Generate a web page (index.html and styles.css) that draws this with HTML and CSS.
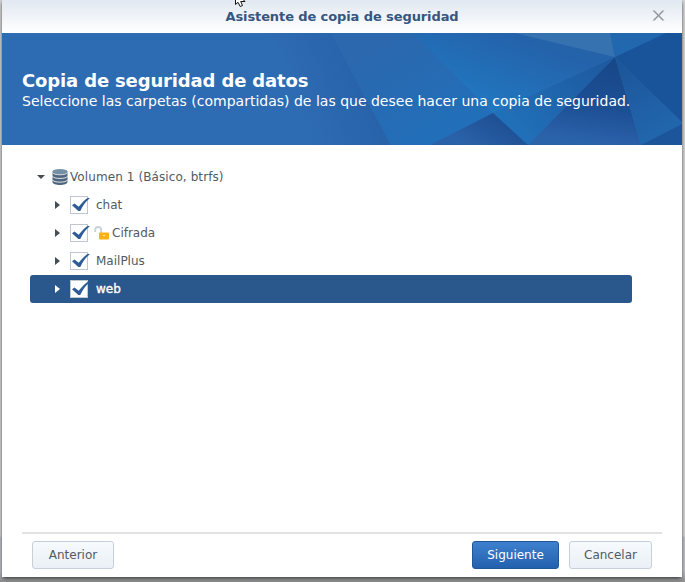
FILE: index.html
```
<!DOCTYPE html>
<html lang="es">
<head>
<meta charset="utf-8">
<title>Asistente de copia de seguridad</title>
<link rel="stylesheet" href="styles.css">
</head>
<body>
<svg class="defs" width="0" height="0" aria-hidden="true">
  <symbol id="check" viewBox="0 0 20 20"><path d="M2 9.200L4.500 7.600 8.700 10.800C11.500 7.200 14.500 4 18 1.800L19.800 2.300C15.500 6 12.500 10 10.300 15H8.300z"/></symbol>
</svg>
<main class="window">
  <header class="titlebar">
    <h1>Asistente de copia de seguridad</h1>
    <svg class="close" width="13" height="12" viewBox="0 0 13 12"><path d="M.5.5h2.200l3.800 4 3.800-4h2.200L7.600 5.500l4.900 5h-2.200l-3.800-4-3.800 4H.5l4.900-5z"/></svg>
    <svg class="cursor" width="14" height="8" viewBox="0 0 14 8"><path d="M1.500-5V4.500L4 2.300l2.200 4.200 2.300-1L6.700 1.500H11L1.500-8z"/></svg>
  </header>
  <section class="banner">
    <svg class="art" width="680" height="112" viewBox="0 0 680 112">
      <defs>
        <linearGradient id="b" gradientUnits="userSpaceOnUse" x1="510" y1="0" x2="480" y2="80"><stop offset="0" stop-color="#2462aa"/><stop offset="1" stop-color="#2079c2"/></linearGradient>
        <linearGradient id="c" gradientUnits="userSpaceOnUse" x1="600" y1="30" x2="510" y2="110"><stop offset="0" stop-color="#1e5aa0"/><stop offset="1" stop-color="#2072bb"/></linearGradient>
        <linearGradient id="d" gradientUnits="userSpaceOnUse" x1="613" y1="24" x2="600" y2="112"><stop offset="0" stop-color="#174788"/><stop offset=".6" stop-color="#1d4f95"/><stop offset="1" stop-color="#2b63ab"/></linearGradient>
        <linearGradient id="e" gradientUnits="userSpaceOnUse" x1="613" y1="24" x2="660" y2="112"><stop offset="0" stop-color="#1c5498"/><stop offset="1" stop-color="#2268af"/></linearGradient>
        <linearGradient id="f" gradientUnits="userSpaceOnUse" x1="500" y1="80" x2="475" y2="120"><stop offset="0" stop-color="#1d4d91"/><stop offset="1" stop-color="#2a62a9"/></linearGradient>
        <linearGradient id="g" gradientUnits="userSpaceOnUse" x1="400" y1="0" x2="460" y2="112"><stop offset="0" stop-color="#2b68ae"/><stop offset="1" stop-color="#2070bb"/></linearGradient>
        <linearGradient id="h" gradientUnits="userSpaceOnUse" x1="290" y1="60" x2="354" y2="35"><stop offset="0" stop-color="#2d6bb3"/><stop offset="1" stop-color="#2863aa"/></linearGradient>
      </defs>
      <path fill="#2d6bb3" d="M0 0h680v112H0z"/>
      <path fill="url(#h)" d="M240 0h89l60 112h-110z"/>
      <path fill="url(#g)" d="M329 0h85l77 80-63 32h-39z"/>
      <path fill="url(#b)" d="M411 0h102l100 24-122 56z"/>
      <path fill="#3672b0" d="M513 0h95l5 24z"/>
      <path fill="#2268ae" d="M608 0h56l-51 24z"/>
      <path fill="#19549a" d="M664 0h16v92l-67-68z"/>
      <path fill="url(#c)" d="M613 24L491 80l35 32z"/>
      <path fill="url(#f)" d="M491 80l35 32h-98z"/>
      <path fill="url(#d)" d="M613 24l26 88H526z"/>
      <path fill="url(#e)" d="M613 24l67 65v2l-41 21z"/>
      <path fill="#1d559b" d="M680 91v21h-41z"/>
    </svg>
    <div class="heading">
      <h2>Copia de seguridad de datos</h2>
      <p>Seleccione las carpetas (compartidas) de las que desee hacer una copia de seguridad.</p>
    </div>
  </section>
  <section class="tree">
    <div class="row root">
      <i class="arrow down"></i>
      <svg class="disk" width="16" height="18" viewBox="0 0 16 18">
        <path fill="#4f677d" d="M.5 3.500v10.500C.5 18 15.500 18 15.500 14V3.500z"/>
        <ellipse cx="8" cy="3.600" rx="7.500" ry="2.600" fill="#7590a5"/>
        <path fill="none" stroke="#eef2f5" stroke-width=".9" d="M.4 4.500c1 3 14.200 3 15.200 0M.4 8.200c1 3 14.200 3 15.200 0M.4 11.900c1 3 14.200 3 15.200 0"/>
      </svg>
      <span class="volume">Volumen 1 (Básico, btrfs)</span>
    </div>
    <div class="row"><i class="arrow"></i><span class="box"><svg width="20" height="20"><use href="#check"/></svg></span><span>chat</span></div>
    <div class="row"><i class="arrow"></i><span class="box"><svg width="20" height="20"><use href="#check"/></svg></span>
      <svg class="lock" width="16" height="14" viewBox="0 0 16 14"><path fill="none" stroke="#c8d1dc" stroke-width="1.800" d="M1.200 6V4c0-4 6-4 6 0v4"/><rect x="5" y="6.500" width="10" height="7" rx="1" fill="#fbb014"/><path fill="#fff0c0" d="M9 9h2v1H9z"/></svg>
      <span>Cifrada</span></div>
    <div class="row"><i class="arrow"></i><span class="box"><svg width="20" height="20"><use href="#check"/></svg></span><span>MailPlus</span></div>
    <div class="row selected"><i class="arrow"></i><span class="box"><svg width="20" height="20"><use href="#check"/></svg></span><span class="name">web</span></div>
  </section>
  <footer class="actions">
    <button class="previous">Anterior</button>
    <button class="primary">Siguiente</button>
    <button class="cancel">Cancelar</button>
  </footer>
</main>
</body>
</html>
```

FILE: styles.css
```
* { box-sizing: border-box; }
body {
  margin: 0;
  height: 582px;
  overflow: hidden;
  background: linear-gradient(#d5d5d5 0 536px, #b9bfc5 537px 571px, #8c8c8c 582px);
  font-family: "DejaVu Sans", sans-serif;
  font-size: 12px;
  color: #505a64;
}
h1, h2, p { margin: 0; white-space: nowrap; }
.defs { position: absolute; }
.window {
  display: flex;
  flex-direction: column;
  width: 680px;
  height: 577px;
  margin-left: 2px;
  background: #fff;
  box-shadow: 0 2px 4px -1px #222, 0 0 3px #aaa;
}
.titlebar {
  position: relative;
  display: flex;
  justify-content: center;
  height: 33px;
  background: linear-gradient(#e1e8f1, #fff);
}
.titlebar h1 {
  font-size: 13px;
  line-height: 33px;
  letter-spacing: -0.1px;
  color: #36567f;
}
.close { position: absolute; left: 650px; top: 10px; fill: #969ca3; }
.cursor { position: absolute; left: 232px; top: 0; fill: #fff; stroke: #111; stroke-width: 1; }
.banner { position: relative; height: 112px; }
.art { position: absolute; inset: 0; }
.heading { position: relative; padding: 37px 20px 0; color: #fff; }
.heading h2 { font-size: 18px; line-height: 21px; letter-spacing: -0.15px; }
.heading p { font-size: 14px; line-height: 20px; }
.tree { flex: 1; padding: 18px 50px 0 28px; }
.row {
  display: flex;
  align-items: center;
  height: 28px;
  padding-left: 25px;
  border-radius: 3px;
  white-space: nowrap;
}
.root { padding-left: 7px; }
.volume { letter-spacing: 0.09px; }
.arrow {
  flex: none;
  width: 5px;
  height: 8px;
  background: #454d55;
  clip-path: polygon(0 0, 100% 50%, 0 100%);
}
.arrow.down { width: 8px; height: 4px; clip-path: polygon(0 0, 100% 0, 50% 100%); }
.disk { margin: 0 2px 0 7px; }
.box {
  position: relative;
  flex: none;
  width: 18px;
  height: 18px;
  margin: 0 8px 0 10px;
  border: 1px solid #bec8d2;
  background: #fff;
}
.box svg { position: absolute; left: -1px; top: -1px; fill: #2d5c96; }
.lock { margin: 0 2px 0 -2px; }
.selected { background: #2a588c; color: #fff; }
.selected .arrow { background: #fff; }
.selected .name { -webkit-text-stroke: 0.35px #fff; }
.actions {
  display: flex;
  align-items: flex-start;
  height: 45px;
  margin: 0 20px;
  padding: 7px 10px 0;
  border-top: 2px solid #e2e2e2;
}
button {
  height: 28px;
  padding: 0;
  border: 1px solid #c5d0da;
  border-radius: 3px;
  background: linear-gradient(#f6fafd, #eaf0f5);
  color: #505a64;
  font: 12px "DejaVu Sans", sans-serif;
}
.previous { width: 82px; margin-right: auto; }
.primary {
  width: 87px;
  margin-right: 10px;
  border-color: #205798;
  background: linear-gradient(#3e80cf, #2361ad);
  color: #fff;
}
.cancel { width: 83px; }
```
